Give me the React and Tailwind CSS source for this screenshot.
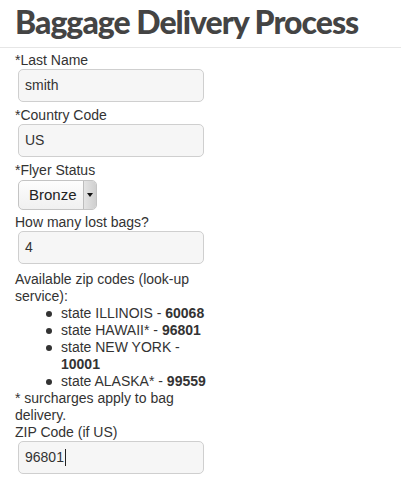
import React from "react";

function Field({ label, value, cursor }) {
  return (
    <div>
      <div className="leading-[17px]">{label}</div>
      <div className="ml-[3px] w-[186px] h-[33px] rounded-[5px] border border-[#cfcfcf] bg-[#f6f6f6] flex items-center pl-[6px] text-[#333] leading-[17px]">
        <span>{value}</span>
        {cursor && <span className="inline-block w-px h-[17px] bg-[#222] ml-px" />}
      </div>
    </div>
  );
}

function Item({ children }) {
  return (
    <li className="flex">
      <span className="w-[15px] shrink-0 flex justify-start pt-[6px]">
        <span className="block w-[6px] h-[6px] rounded-full bg-[#333]" />
      </span>
      <span>{children}</span>
    </li>
  );
}

export default function App() {
  return (
    <div className="w-[401px] h-[486px] bg-white text-[#333] text-[14px] overflow-hidden" style={{ fontFamily: '"Liberation Sans", Arial, sans-serif' }}>
      <h1
        className="pl-[15px] pt-[2px] h-[47px] text-[32px] leading-[40px] font-black text-[#444] whitespace-nowrap tracking-[-1px]"
        style={{ fontFamily: 'Lato, sans-serif' }}
      >
        Baggage Delivery Process
      </h1>
      <div className="h-px bg-[#e6e6e6] w-full" />
      <div className="pl-[15px] w-[220px] pt-[4px] flex flex-col whitespace-nowrap">
        <Field label="*Last Name" value="smith" />
        <div className="mt-[5px]">
          <Field label="*Country Code" value="US" />
        </div>
        <div className="mt-[5px]">
          <div className="leading-[17px]">*Flyer Status</div>
          <div className="ml-[3px] mt-px w-[79px] h-[30px] rounded-[5px] border border-[#c4c4c4] bg-gradient-to-b from-[#fdfdfd] to-[#f0f0f0] flex overflow-hidden">
            <div className="flex-1 flex items-center pl-[10px] text-[#222] text-[15px]">Bronze</div>
            <div className="w-[13px] bg-gradient-to-r from-[#e4e4e4] to-[#cfcfcf] border-l border-[#bdbdbd] flex items-center justify-center">
              <svg width="6" height="4" viewBox="0 0 6 4"><path d="M0 0 L6 0 L3 4 Z" fill="#111" /></svg>
            </div>
          </div>
        </div>
        <div className="mt-[4px]">
          <Field label="How many lost bags?" value="4" />
        </div>
        <div className="mt-[7px] leading-[17px]">
          <div>Available zip codes (look-up<br />service):</div>
          <ul className="pl-[31px]">
            <Item>state ILLINOIS - <b>60068</b></Item>
            <Item>state HAWAII* - <b>96801</b></Item>
            <Item>state NEW YORK -<br /><b>10001</b></Item>
            <Item>state ALASKA* - <b>99559</b></Item>
          </ul>
          <div>* surcharges apply to bag<br />delivery.</div>
        </div>
        <div>
          <Field label="ZIP Code (if US)" value="96801" cursor />
        </div>
      </div>
    </div>
  );
}
